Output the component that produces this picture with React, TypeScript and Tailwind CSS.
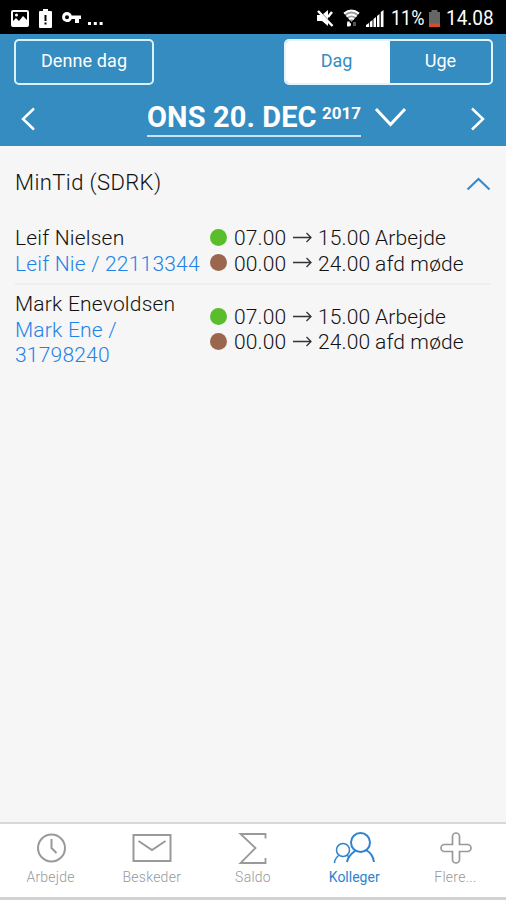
import type { ReactNode } from "react"

const people = [
  { name: "Leif Nielsen", contact: "Leif Nie / 22113344" },
  { name: "Mark Enevoldsen", contact: "Mark Ene / 31798240" },
]

const StatusBar = () => (
  <div className="flex h-[34px] shrink-0 items-center justify-between bg-black pl-[11px] pr-[13px] pt-[2px] text-white">
    <div className="flex items-center">
      <svg width="18" height="17" viewBox="0 0 18 17">
        <path fill="white" fillRule="evenodd" d="M2 0h14a2 2 0 0 1 2 2v13a2 2 0 0 1-2 2H2a2 2 0 0 1-2-2V2a2 2 0 0 1 2-2Zm0 2v9l3-3 3 3 4-5 4 4V2Z" />
        <circle cx="5.500" cy="5" r="1.500" fill="white" />
      </svg>
      <svg className="ml-[10px]" width="13" height="19" viewBox="0 0 13 19">
        <path fill="white" d="M4 0h5v2h3a1 1 0 0 1 1 1v15a1 1 0 0 1-1 1H1a1 1 0 0 1-1-1V3a1 1 0 0 1 1-1h3Z" />
        <path fill="black" d="M5.500 6h2v6h-2Zm0 7.500h2v2h-2Z" />
      </svg>
      <svg className="ml-[10px]" width="19" height="12" viewBox="0 0 19 12">
        <path fill="white" fillRule="evenodd" d="M5 0a5 5 0 0 1 4.700 3.500H19v3.500h-2v4h-4V7H9.700A5 5 0 1 1 5 0Zm0 3.300a2 2 0 1 0 0 4 2 2 0 0 0 0-4Z" />
      </svg>
      <svg className="ml-[7px] mt-[12px]" width="15" height="4" viewBox="0 0 15 4">
        <path fill="white" d="M0 0h3v3H0ZM5.800 0h3v3h-3ZM11.600 0h3v3h-3Z" />
      </svg>
    </div>
    <div className="flex items-center font-[Roboto] text-[20px] leading-none">
      <svg width="18" height="18" viewBox="0 0 18 18">
        <path fill="white" d="M1 6h5l6-5v16l-6-5H1Z" />
        <path d="m1 0 15.500 16" stroke="black" strokeWidth="1.500" />
        <path d="m2 2 14.500 15M12 8l4-5" stroke="white" strokeWidth="2.500" />
      </svg>
      <svg className="ml-[9px]" width="17" height="19" viewBox="0 0 17 19">
        <path fill="#999" d="M1 4.500q7.500-6 15 0L8.500 13Z" />
        <g fill="none" stroke="white" strokeWidth="2">
          <path d="M1 4.500q7.500-6 15 0" />
          <path d="M3.500 7.500q5-4 10 0" />
          <path d="M6 10.300q2.500-2 5 0" />
        </g>
        <path d="M5.500 12.500v5M4 15.500h4" stroke="white" strokeWidth="2.500" />
        <path d="M11.500 13v4" stroke="#555" strokeWidth="3" />
      </svg>
      <svg className="ml-[6px]" width="18" height="18" viewBox="0 0 18 18">
        <path fill="white" d="M0 18v-2l3-2v4ZM3.800 18v-5l2.700-2v7ZM7.500 18V10l2.500-2v10ZM11 18V7L13.500 5V18ZM14.800 18V3L17.500 1v17Z" />
      </svg>
      <span className="ml-[7px] w-[34px] whitespace-nowrap">
        <span className="inline-block origin-left scale-x-[.9]">11%</span>
      </span>
      <svg className="ml-[4px]" width="11" height="17" viewBox="0 0 11 17">
        <path fill="#666" d="M2.500 0h6v2H11v15H0V2h2.500Z" />
        <path fill="#d54e2b" d="M0 13.500h11V17H0Z" />
      </svg>
      <span className="ml-[6px] w-[47px] whitespace-nowrap">
        <span className="inline-block origin-left scale-x-[.95]">14.08</span>
      </span>
    </div>
  </div>
)

const Header = () => (
  <header className="h-[112px] shrink-0 bg-[#348cc1] px-[14px] pt-[5px] font-[Roboto] text-white">
    <div className="flex justify-between">
      <button className="h-[46px] w-[140px] rounded-[5px] border-2 border-[#d9f1fb] pb-[3px] text-[18px] tracking-[.1px]">Denne dag</button>
      <div className="mr-[-1px] flex h-[46px] w-[209px] overflow-hidden rounded-[5px] border-2 border-[#e3f5fc] text-[18px]">
        <button className="w-[104px] bg-white pb-[3px] pr-[3px] text-[#348cc1]">Dag</button>
        <button className="flex-1 pb-[3px]">Uge</button>
      </div>
    </div>
    <div className="flex items-start pl-[6px] pr-[6px] pt-[11px]">
      <svg className="mt-[11px]" width="16" height="24" viewBox="0 0 16 24" fill="none" stroke="white" strokeWidth="2.500">
        <path d="M14 1.500 3 12l11 10.500" />
      </svg>
      <div className="ml-[111px] flex">
        <h1 className="flex h-[41px] w-[214px] justify-between whitespace-nowrap border-b-2 border-[#c8e1f4] text-[29px] font-bold leading-[43px]">
          <span className="tracking-[.1px]">ONS 20. DEC</span>
          <span className="text-[17px] leading-[34px]">2017</span>
        </h1>
        <svg className="ml-[13px] mt-[11px]" width="33" height="21" viewBox="0 0 33 21" fill="none" stroke="white" strokeWidth="3">
          <path d="m2 2 14.500 15.500L31 2" />
        </svg>
      </div>
      <svg className="mt-[11px] ml-auto" width="16" height="24" viewBox="0 0 16 24" fill="none" stroke="white" strokeWidth="2.500">
        <path d="m2 1.500 11 10.500L2 22.500" />
      </svg>
    </div>
  </header>
)

const Shift = ({ dot, time, end, label }: { dot: string; time: string; end: string; label: string }) => (
  <div className="flex h-[25.500px] items-center whitespace-nowrap">
    <span className={`mr-[7px] mb-[3px] size-[17px] rounded-full ${dot}`}></span>
    <span className="w-[53px] tracking-[.15px]">{time}</span>
    <svg className="ml-[6px] mr-[5px] mb-[2px]" width="20" height="12" viewBox="0 0 20 12" fill="none" stroke="#333" strokeWidth="1.300">
      <path d="M0 5.500h18M13.500 1l4.500 4.500-4.500 4.500" />
    </svg>
    <span className="w-[57px] tracking-[.15px]">{end}</span>
    <span className="tracking-[.15px]">{label}</span>
  </div>
)

const Tab = ({ label, active, children }: { label: string; active?: boolean; children: ReactNode }) => (
  <a href="#" className={`flex flex-1 flex-col items-center pt-[7px] ${active ? "text-[#2e83cf]" : "text-[#999]"}`}>
    <svg width="44" height="36" viewBox="0 0 44 36" fill="none" stroke="currentColor" strokeWidth="2">
      {children}
    </svg>
    <span className={`text-[14px] leading-[20px] ${active ? "font-normal" : "font-light tracking-[.25px]"}`}>{label}</span>
  </a>
)

const App = () => {
  return (
    <div className="flex h-[900px] w-[506px] flex-col overflow-hidden bg-[#f6f6f6] font-[Roboto]">
      <StatusBar />
      <Header />
      <main className="flex-1 px-[15px] text-[21px] font-light leading-[25.500px] text-[#111]">
        <div className="flex h-[73px] items-center justify-between">
          <h2 className="text-[22px] tracking-[.4px]">MinTid (SDRK)</h2>
          <svg className="mt-[3px]" width="25" height="14" viewBox="0 0 25 14" fill="none" stroke="#348cd0" strokeWidth="2.200">
            <path d="m1.500 12.500 11-10.500 11 10.500" />
          </svg>
        </div>
        {people.map((person, i) => (
          <div key={person.name} className={`flex items-center ${i === 0 ? "border-b-2 border-[#eee] pt-[7px] pb-[6px]" : "pt-[7px]"}`}>
            <div className="w-[195px] pr-[5px] tracking-[.2px]">
              <p>{person.name}</p>
              <p className="text-[#1f83e6]">{person.contact}</p>
            </div>
            <div>
              <Shift dot="bg-[#5abe2c]" time="07.00" end="15.00" label="Arbejde" />
              <Shift dot="bg-[#9a664e]" time="00.00" end="24.00" label="afd møde" />
            </div>
          </div>
        ))}
      </main>
      <nav className="flex h-[78px] shrink-0 border-t-2 border-b-3 border-t-[#d8d8d8] border-b-[#d2d2d2] bg-white">
        <Tab label="Arbejde">
          <circle cx="22.500" cy="17" r="13.500" />
          <path d="M22.500 8v9l5 5" />
        </Tab>
        <Tab label="Beskeder">
          <path d="M3.500 4h37v26h-37ZM8.500 10 22 19l13.500-9" />
        </Tab>
        <Tab label="Saldo">
          <path d="M34.500 7.500V3h-25l15 14-15 15h25v-5" strokeWidth="1.800" />
        </Tab>
        <Tab label="Kolleger" active>
          <circle cx="28.500" cy="11.500" r="9.500" />
          <path d="M15 31q1-6 8-11M34 19q7 4 8 12" />
          <circle cx="11" cy="19" r="6.500" strokeWidth="1.500" />
          <path d="M2.500 32q0-4 4-7.500M15 24q2 2 2.500 3" strokeWidth="1.500" />
        </Tab>
        <Tab label="Flere...">
          <path d="M19.500 5.500a3.500 3.500 0 0 1 7 0v8h8a3.500 3.500 0 0 1 0 7h-8v8a3.500 3.500 0 0 1-7 0v-8h-8a3.500 3.500 0 0 1 0-7h8Z" strokeWidth="1.700" />
        </Tab>
      </nav>
    </div>
  )
}

export default App
